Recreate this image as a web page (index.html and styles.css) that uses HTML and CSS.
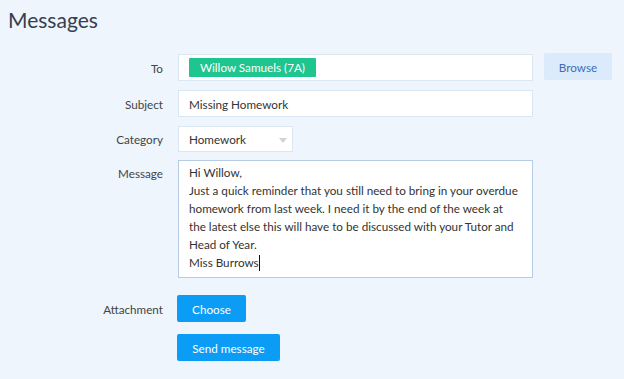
FILE: index.html
```html
<!DOCTYPE html>
<html>
<head>
<meta charset="utf-8">
<link rel="stylesheet" href="styles.css">
</head>
<body>
<h1 class="title">Messages</h1>
<form class="form">
  <label class="label">To</label>
  <div class="field recipients"><span class="chip">Willow Samuels (7A)</span></div>
  <button type="button" class="btn-browse">Browse</button>

  <label class="label">Subject</label>
  <div class="field">Missing Homework</div>
  <span></span>

  <label class="label">Category</label>
  <div class="select-row"><div class="field select">Homework<span class="arrow"></span></div></div>
  <span></span>

  <label class="label label-top">Message</label>
  <div class="field textarea">Hi Willow,<br>Just a quick reminder that you still need to bring in your overdue homework from last week. I need it by the end of the week at the latest else this will have to be discussed with your Tutor and Head of Year.<br>Miss Burrows<span class="caret"></span></div>
  <span></span>

  <label class="label label-attach">Attachment</label>
  <div class="btn-row btn-row-attach"><button type="button" class="btn-primary btn-choose">Choose</button></div>
  <span></span>

  <span></span>
  <div class="btn-row btn-row-send"><button type="button" class="btn-primary btn-send">Send message</button></div>
  <span></span>
</form>
</body>
</html>
```
FILE: styles.css
```css
html, body {
  margin: 0;
  padding: 0;
  background: #eef5fd;
}
body {
  font-family: Lato, "Open Sans", sans-serif;
  color: #444;
  width: 624px;
  height: 379px;
  overflow: hidden;
}
.title {
  margin: 0;
  padding: 6px 0 0 8px;
  height: 48px;
  box-sizing: border-box;
  font-size: 21px;
  font-weight: 400;
  color: #35404f;
  line-height: 28px;
}
.form {
  display: grid;
  grid-template-columns: 163px 355px 80px;
  column-gap: 15px;
  row-gap: 9px;
  padding-top: 6px;
}
.form > span { display: block; }
.label {
  font-size: 11.7px;
  text-align: right;
  align-self: center;
  color: #444;
}
.label-top { align-self: start; padding-top: 5px; }
.field {
  background: #fff;
  border: 1px solid #dbe6f3;
  height: 27px;
  box-sizing: border-box;
  font-size: 11.7px;
  padding: 0 10px;
  display: flex;
  align-items: center;
  color: #333;
}
.chip {
  background: #1ec58e;
  color: #fff;
  font-size: 11.7px;
  height: 19px;
  line-height: 19px;
  padding: 0 11px;
  border-radius: 1px;
}
.btn-browse {
  margin-left: -4px;
  width: 68px;
  height: 27px;
  margin-top: -1px;
  background: #dbebfc;
  border: none;
  border-radius: 2px;
  color: #3e6cb8;
  font-family: Lato, sans-serif;
  font-size: 11.7px;
  padding: 0;
}
.select-row { display: flex; }
.select {
  width: 115px;
  height: 26px;
  position: relative;
}
.arrow {
  position: absolute;
  right: 5px;
  top: 11px;
  border-left: 4px solid transparent;
  border-right: 4px solid transparent;
  border-top: 5px solid #cfd3d8;
}
.textarea {
  display: block;
  height: 118px;
  margin-top: -1px;
  padding: 2px 12px 2px 10px;
  line-height: 18px;
  border-color: #b6cbe6;
}
.caret {
  display: inline-block;
  width: 1px;
  height: 16px;
  background: #111;
  vertical-align: -4px;
}
.btn-row { display: flex; }
.label-attach { margin-top: 8px; }
.btn-row-attach { margin-top: 8px; }
.btn-row-send { margin-top: 3px; }
.btn-primary {
  background: #0b9cf6;
  color: #fff;
  border: none;
  border-radius: 2px;
  height: 27px;
  padding: 0;
  font-family: Lato, sans-serif;
  font-size: 11.7px;
  margin-left: -1px;
}
.btn-choose { width: 69px; }
.btn-send { width: 103px; }
```
